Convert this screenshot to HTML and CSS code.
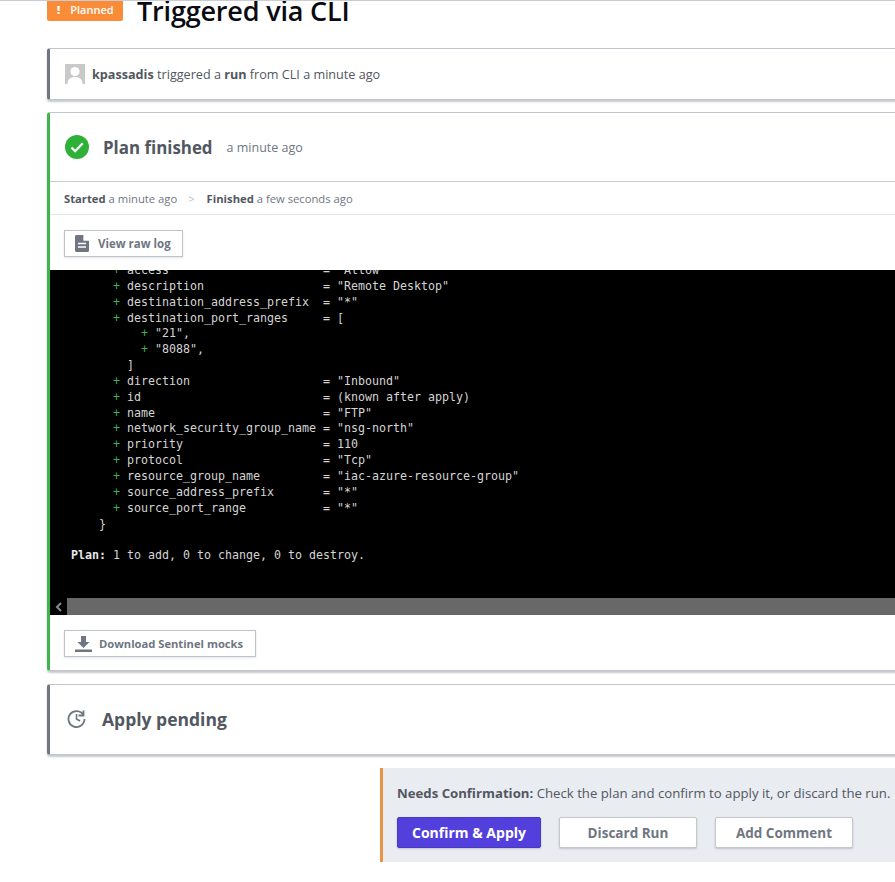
FILE: index.html
```html
<!DOCTYPE html>
<html lang="en">
<head>
<meta charset="utf-8">
<title>Triggered via CLI</title>
<link rel="stylesheet" href="styles.css">
</head>
<body>
<div class="page">
  <header class="title-row">
    <span class="badge"><span class="bang">!</span>Planned</span>
    <h1>Triggered via CLI</h1>
  </header>

  <section class="card card-gray trigger">
    <svg class="avatar" viewBox="0 0 20 20" aria-hidden="true"><rect width="20" height="20" fill="#c9c9c9"/><circle cx="10" cy="7.500" r="4.600" fill="#fff"/><path d="M2.500 20c0-5 3-7 7.500-7s7.500 2 7.500 7z" fill="#fff"/></svg>
    <p><b>kpassadis</b> triggered a <b>run</b> from CLI a minute ago</p>
  </section>

  <section class="card card-green plan">
    <div class="plan-head">
      <svg class="check" viewBox="0 0 24 24" aria-hidden="true"><circle cx="12" cy="12" r="12" fill="#2eb039"/><path d="M6.500 12.500l3.700 3.700 7.500-7.900" fill="none" stroke="#fff" stroke-width="2.200"/></svg>
      <h2>Plan finished</h2>
      <span class="ago">a minute ago</span>
    </div>
    <div class="meta">
      <span><b>Started</b> a minute ago</span>
      <span class="sep">&gt;</span>
      <span><b>Finished</b> a few seconds ago</span>
    </div>
    <div class="tool-row">
      <button class="tool-btn raw">
        <svg width="14" height="17" viewBox="0 0 14 17" aria-hidden="true"><path d="M1.500 0H9l5 5v10.500a1.500 1.500 0 0 1-1.500 1.500h-11A1.500 1.500 0 0 1 0 15.500v-14A1.500 1.500 0 0 1 1.500 0z" fill="#6f7682"/><path d="M9 0v5h5zM3 8.500h8M3 12h8" fill="#fff" stroke="#fff" stroke-width="1.300"/></svg>
        View raw log
      </button>
    </div>
    <div class="terminal">
<pre class="log">      <i>+</i> access                      = "Allow"
      <i>+</i> description                 = "Remote Desktop"
      <i>+</i> destination_address_prefix  = "*"
      <i>+</i> destination_port_ranges     = [
          <i>+</i> "21",
          <i>+</i> "8088",
        ]
      <i>+</i> direction                   = "Inbound"
      <i>+</i> id                          = (known after apply)
      <i>+</i> name                        = "FTP"
      <i>+</i> network_security_group_name = "nsg-north"
      <i>+</i> priority                    = 110
      <i>+</i> protocol                    = "Tcp"
      <i>+</i> resource_group_name         = "iac-azure-resource-group"
      <i>+</i> source_address_prefix       = "*"
      <i>+</i> source_port_range           = "*"
    }

<b>Plan:</b> 1 to add, 0 to change, 0 to destroy.</pre>
      <div class="scrollbar">
        <span class="scroll-arrow"><svg width="8" height="10" viewBox="0 0 8 10" aria-hidden="true"><path d="M6 1L2 5l4 4" fill="none" stroke="#8a8a8a" stroke-width="2"/></svg></span>
      </div>
    </div>
    <div class="tool-row foot">
      <button class="tool-btn">
        <svg width="17" height="16" viewBox="0 0 17 16" aria-hidden="true"><path d="M6 0h5v6h3.500l-6 6-6-6H6zM0 13.500h17V16H0z" fill="#6f7682"/></svg>
        Download Sentinel mocks
      </button>
    </div>
  </section>

  <section class="card card-gray pending">
    <svg class="clock" width="19" height="19" viewBox="0 0 19 19" aria-hidden="true"><path d="M16.500 1.500V6.500H11.500M16.400 6A8 8 0 1 0 17.500 10" fill="none" stroke="#6f7682" stroke-width="1.800"/><path d="M9.500 5v5l3.500 2" fill="none" stroke="#6f7682" stroke-width="1.600"/></svg>
    <h2>Apply pending</h2>
  </section>

  <aside class="confirm">
    <p><b>Needs Confirmation:</b> Check the plan and confirm to apply it, or discard the run.</p>
    <div class="actions">
      <button class="act primary">Confirm &amp; Apply</button>
      <button class="act">Discard Run</button>
      <button class="act">Add Comment</button>
    </div>
  </aside>
</div>
</body>
</html>
```
FILE: styles.css
```css
* { box-sizing: border-box; }
html, body { margin: 0; padding: 0; height: 882px; overflow: hidden; background: #fff; }
body { font-family: "Open Sans", "Noto Sans", sans-serif; color: #525761; }
.page { width: 895px; height: 882px; overflow: hidden; border-top: 1px solid #c9ccd2; }
.title-row { height: 47px; margin-left: 47px; display: flex; align-items: flex-start; gap: 14px; }
.badge { width: 76px; height: 20px; background: #fb8c37; border-radius: 0 0 2px 2px; color: #fff; font-size: 11px; font-weight: 600; line-height: 18px; padding-left: 10px; display: flex; gap: 10px; }
.bang { font-weight: 800; }
h1 { margin: -8px 0 0; font-size: 27.050px; line-height: 36px; font-weight: 600; color: #0a0a12; white-space: nowrap; letter-spacing: -0.2px; }
.card { margin-left: 47px; width: 880px; background: #fff; border: 1px solid #c2c5cd; border-left-width: 0; border-radius: 3px 0 0 3px; box-shadow: 0 2px 2px rgba(70,75,90,.3); }
.card-gray { border-left: 3px solid #6f7682; }
.card-green { border-left: 3px solid #3db54a; }
.trigger { height: 52px; display: flex; align-items: center; padding-left: 15px; gap: 7px; }
.avatar { width: 20px; height: 20px; display: block; }
.trigger p { margin: 0; font-size: 12.630px; white-space: nowrap; }
b { font-weight: 700; }
.plan { margin-top: 12px; display: flex; flex-direction: column; }
.plan-head { height: 69px; flex: none; display: flex; align-items: center; padding-left: 15px; border-bottom: 1px solid #c9ccd2; }
.check { width: 24px; height: 24px; display: block; }
h2 { margin: 0; font-size: 17.500px; font-weight: 700; color: #525761; white-space: nowrap; }
.plan-head h2 { margin-left: 14px; font-size: 16.900px; }
.ago { margin-left: 14px; font-size: 12.500px; color: #6f7682; }
.meta { height: 33px; flex: none; display: flex; align-items: center; padding-left: 14px; font-size: 11.250px; color: #6f7682; border-bottom: 1px solid #e3e5e8; white-space: nowrap; }
.meta b { color: #525761; }
.sep { margin: 0 12px 0 11px; color: #b9bcc2; }
.tool-row { height: 55px; flex: none; display: flex; align-items: flex-start; padding: 15px 0 0 14px; }
.tool-btn { height: 27px; padding: 0 0 0 10px; display: flex; align-items: center; gap: 9px; background: #fff; border: 1px solid #bfc2c9; color: #6f7682; font: 700 11.500px "Open Sans", sans-serif; box-shadow: 0 1px 2px rgba(70,75,90,.15); white-space: nowrap; }
.tool-btn svg { flex: none; }
.raw { width: 119px; }
.foot .tool-btn { width: 192px; gap: 7px; font-size: 11.200px; }
.terminal { height: 345px; flex: none; background: #000; overflow: hidden; display: flex; flex-direction: column; justify-content: space-between; }
.log { margin: -7px 0 0; padding-left: 21px; font: 11.630px/15.850px "DejaVu Sans Mono", "Liberation Mono", monospace; color: #d4d4d4; white-space: pre; }
.log i { font-style: normal; color: #3fae5a; }
.log b { color: #e8e8e8; }
.scrollbar { height: 17px; background: #686868; flex: none; }
.scroll-arrow { width: 17px; height: 17px; background: #000; display: flex; align-items: center; justify-content: center; }
.pending { margin-top: 13px; height: 71px; display: flex; align-items: center; padding: 0 0 2px 17px; gap: 16px; }
.confirm { margin: 13px 0 0 380px; width: 515px; height: 94px; background: #e9ecf1; border-left: 3px solid #ea9347; padding: 16px 0 0 14px; }
.confirm p { margin: 0; font-size: 13.200px; line-height: 18px; white-space: nowrap; }
.actions { display: flex; gap: 18px; margin-top: 15px; }
.act { width: 138px; height: 31px; background: #fff; border: 1px solid #c4c7cd; border-radius: 2px; color: #6f7682; font: 700 13.500px "Open Sans", sans-serif; box-shadow: 0 1px 2px rgba(70,75,90,.25); }
.primary { width: 144px; background: #5340dc; border-color: #4a39c4; color: #fff; font-size: 14px; }
```
